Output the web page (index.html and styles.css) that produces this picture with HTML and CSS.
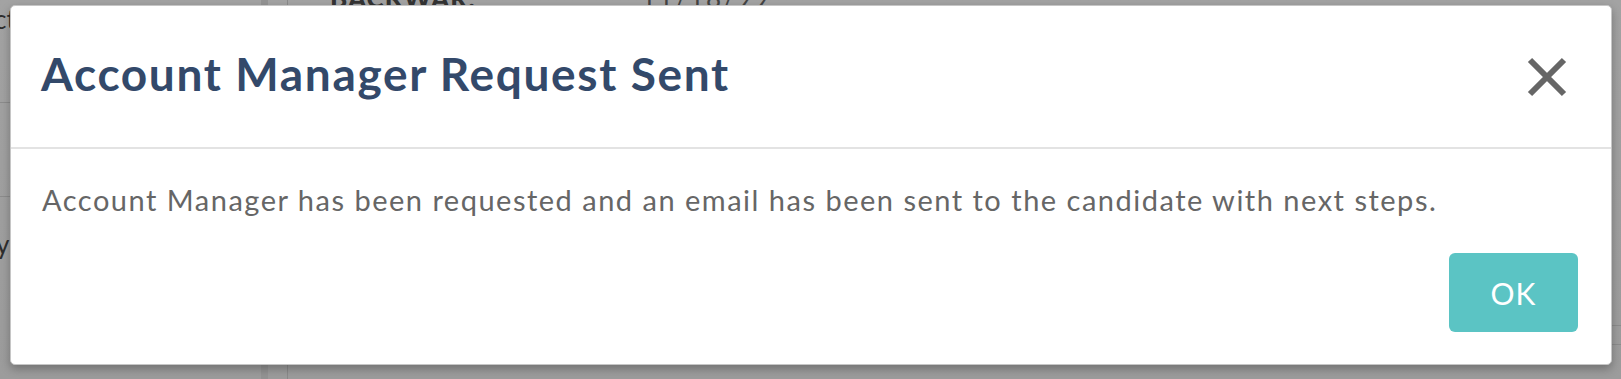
FILE: index.html
```html
<!DOCTYPE html>
<html lang="en">
<head>
<meta charset="utf-8">
<title>Account Manager Request Sent</title>
<link rel="stylesheet" href="styles.css">
</head>
<body>
<div class="page">
  <div class="under">
    <span class="frag frag-ct">ct</span>
    <span class="frag frag-y">y</span>
    <span class="frag frag-top">BACKWAR:</span>
    <span class="frag frag-date">11/18/99</span>
    <span class="rule rule-a"></span>
    <span class="rule rule-b"></span>
    <span class="rule rule-c"></span>
    <span class="rule rule-d"></span>
    <span class="vrule vrule-a"></span>
    <span class="vrule vrule-b"></span>
  </div>
  <div class="backdrop">
    <div class="dialog" role="dialog">
      <div class="dialog-header">
        <h1 class="dialog-title">Account Manager Request Sent</h1>
        <button class="close" aria-label="Close">
          <svg width="40" height="40" viewBox="0 0 40 40">
            <path d="M3 3 L37 37 M37 3 L3 37" stroke="#666" stroke-width="6" stroke-linecap="butt"/>
          </svg>
        </button>
      </div>
      <div class="dialog-body">
        <p class="message">Account Manager has been requested and an email has been sent to the candidate with next steps.</p>
      </div>
      <div class="dialog-footer">
        <button class="ok">OK</button>
      </div>
    </div>
  </div>
</div>
</body>
</html>
```

FILE: styles.css
```css
html, body {
  margin: 0;
  padding: 0;
}
body {
  background: #9f9f9f;
  font-family: "Lato", "Liberation Sans", sans-serif;
  width: 1621px;
  height: 379px;
  overflow: hidden;
}
.page {
  position: relative;
  width: 1621px;
  height: 379px;
  background: linear-gradient(#a3a3a3, #9c9c9c);
}
.under {
  position: absolute;
  inset: 0;
}
.frag {
  position: absolute;
  color: #2e2e2e;
  font-size: 26px;
  font-family: "Lato", sans-serif;
}
.frag-ct { left: -6px; top: 3px; }
.frag-y { left: -4px; top: 228px; }
.frag-top { left: 330px; top: -18px; font-weight: 900; color: #333; letter-spacing: 1px; }
.frag-date { left: 641px; top: -18px; color: #444; letter-spacing: 2px; }
.rule {
  position: absolute;
  background: #8c8c8c;
}
.rule-a { left: 0; top: 102px; width: 10px; height: 1px; }
.rule-b { left: 0; top: 196px; width: 10px; height: 1px; }
.rule-c { left: 1612px; top: 325px; width: 9px; height: 1px; }
.rule-d { left: 1612px; top: 344px; width: 9px; height: 1px; }
.vrule {
  position: absolute;
  top: 0;
  height: 379px;
}
.vrule-a { left: 261px; width: 7px; background: #939393; }
.vrule-b { left: 287px; width: 1px; background: #8a8a8a; }
.backdrop {
  position: relative;
  padding: 5px 9px 14px 10px;
}
.dialog {
  width: 1602px;
  height: 360px;
  box-sizing: border-box;
  background: #fff;
  border: 1px solid #c6c6c6;
  border-radius: 5px;
  box-shadow: 0 4px 10px rgba(0, 0, 0, 0.28);
  display: flex;
  flex-direction: column;
}
.dialog-header {
  height: 143px;
  box-sizing: border-box;
  border-bottom: 2px solid #e3e3e3;
  display: flex;
  align-items: flex-start;
  justify-content: space-between;
  padding: 40px 44px 0 30px;
}
.dialog-title {
  margin: 0;
  font-size: 46px;
  line-height: 55px;
  font-weight: 700;
  color: #33496a;
  letter-spacing: 1.65px;
}
.close {
  border: 0;
  background: none;
  padding: 0;
  margin-top: 11px;
  width: 40px;
  height: 40px;
  display: block;
}
.close svg { display: block; }
.dialog-body {
  padding: 34px 31px 0 31px;
}
.message {
  margin: 0;
  font-size: 29px;
  line-height: 34px;
  color: #666;
  letter-spacing: 1.5px;
}
.dialog-footer {
  display: flex;
  justify-content: flex-end;
  padding: 36px 33px 0 0;
}
.ok {
  width: 129px;
  height: 79px;
  border: 0;
  border-radius: 6px;
  background: #5bc4c4;
  color: #fff;
  font-family: "Lato", "Liberation Sans", sans-serif;
  font-size: 30px;
  letter-spacing: 1px;
  padding: 0;
}
```
